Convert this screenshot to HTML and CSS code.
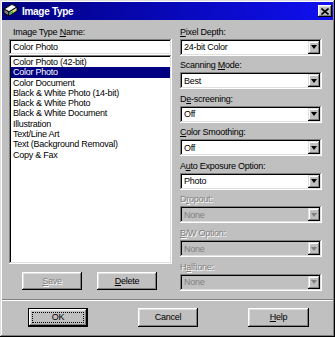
FILE: index.html
```html
<!DOCTYPE html>
<html lang="en">
<head>
    <meta charset="UTF-8">
    <title>Image Type</title>
    <link rel="stylesheet" href="styles.css">
</head>
<body>
    <div class="window">
        <div class="titlebar">
            <svg class="app-icon" width="16" height="16" viewBox="0 0 16 16">
                <polygon points="1,6 9,1 14,4 6,9" fill="#c0c0c0" stroke="#000" stroke-width="1"/>
                <polygon points="3,6 9,2.5 12,4.3 6,7.8" fill="#fff"/>
                <polygon points="1,6 6,9 6,13 1,10" fill="#808080" stroke="#000" stroke-width="1"/>
                <polygon points="6,9 14,4 14,8 6,13" fill="#dfdfdf" stroke="#000" stroke-width="1"/>
                <line x1="7" y1="10.5" x2="10" y2="8.7" stroke="#00a000" stroke-width="1.2"/>
                <line x1="10" y1="8.7" x2="13" y2="6.9" stroke="#e0e000" stroke-width="1.2"/>
            </svg>
            <span class="title">Image Type</span>
            <button class="close-btn">
                <svg width="8" height="7" viewBox="0 0 8 7">
                    <path d="M0.5 0.5 L7.5 6.5 M7.5 0.5 L0.5 6.5" stroke="#000" stroke-width="1.6"/>
                </svg>
            </button>
        </div>

        <div class="dialog">
            <div class="left">
                <div class="lbl">Image Type <u>N</u>ame:</div>
                <div class="field">Color Photo</div>
                <ul class="listbox">
                    <li>Color Photo (42-bit)</li>
                    <li class="selected">Color Photo</li>
                    <li>Color Document</li>
                    <li>Black &amp; White Photo (14-bit)</li>
                    <li>Black &amp; White Photo</li>
                    <li>Black &amp; White Document</li>
                    <li>Illustration</li>
                    <li>Text/Line Art</li>
                    <li>Text (Background Removal)</li>
                    <li>Copy &amp; Fax</li>
                </ul>
                <div class="list-buttons">
                    <button class="btn" disabled><u>S</u>ave</button>
                    <button class="btn"><u>D</u>elete</button>
                </div>
            </div>

            <div class="right">
                <div class="group">
                    <div class="lbl"><u>P</u>ixel Depth:</div>
                    <div class="combo"><span class="value">24-bit Color</span><span class="drop"></span></div>
                </div>
                <div class="group">
                    <div class="lbl">Scanning <u>M</u>ode:</div>
                    <div class="combo"><span class="value">Best</span><span class="drop"></span></div>
                </div>
                <div class="group">
                    <div class="lbl">D<u>e</u>-screening:</div>
                    <div class="combo"><span class="value">Off</span><span class="drop"></span></div>
                </div>
                <div class="group">
                    <div class="lbl"><u>C</u>olor Smoothing:</div>
                    <div class="combo"><span class="value">Off</span><span class="drop"></span></div>
                </div>
                <div class="group">
                    <div class="lbl">A<u>u</u>to Exposure Option:</div>
                    <div class="combo"><span class="value">Photo</span><span class="drop"></span></div>
                </div>
                <div class="group disabled">
                    <div class="lbl">D<u>r</u>opout:</div>
                    <div class="combo"><span class="value">None</span><span class="drop"></span></div>
                </div>
                <div class="group disabled">
                    <div class="lbl"><u>B</u>/W Option:</div>
                    <div class="combo"><span class="value">None</span><span class="drop"></span></div>
                </div>
                <div class="group disabled">
                    <div class="lbl">H<u>a</u>lftone:</div>
                    <div class="combo"><span class="value">None</span><span class="drop"></span></div>
                </div>
            </div>
        </div>

        <div class="separator"></div>

        <div class="footer">
            <button class="btn default"><span class="focus">OK</span></button>
            <button class="btn">Cancel</button>
            <button class="btn wide"><u>H</u>elp</button>
        </div>
    </div>
</body>
</html>
```

FILE: styles.css
```css
body {
    margin: 0;
    font-family: "Liberation Sans", Arial, sans-serif;
    font-size: 9px;
    letter-spacing: -0.25px;
    color: #000;
    background-color: #c0c0c0;
}
.window {
    width: 335px;
    height: 337px;
    box-sizing: border-box;
    padding: 2px;
    background-color: #c0c0c0;
    box-shadow: inset -1px -1px #000, inset 1px 1px #dfdfdf, inset -2px -2px #808080, inset 2px 2px #fff;
    display: flex;
    flex-direction: column;
}
.titlebar {
    height: 18px;
    display: flex;
    align-items: center;
    padding: 0 1px 0 1px;
    background: linear-gradient(90deg, #000080, #1010f0);
    color: #fff;
}
.app-icon {
    flex: none;
}
.title {
    margin-left: 3px;
    font-size: 10px;
    font-weight: bold;
    letter-spacing: -0.3px;
}
.close-btn {
    margin-left: auto;
    width: 14px;
    height: 12px;
    padding: 0;
    border: 0;
    background-color: #c0c0c0;
    box-shadow: inset -1px -1px #000, inset 1px 1px #fff, inset -2px -2px #808080, inset 2px 2px #dfdfdf;
    display: flex;
    align-items: center;
    justify-content: center;
}
.dialog {
    display: grid;
    grid-template-columns: 163px 142px;
    column-gap: 8px;
    padding: 5.5px 0 0 7px;
}
.left {
    display: flex;
    flex-direction: column;
}
.lbl {
    height: 13px;
    line-height: 13px;
    padding-left: 4px;
    white-space: nowrap;
}
.right .lbl {
    padding-left: 0;
}
.field {
    height: 16.5px;
    box-sizing: border-box;
    padding: 0 4px;
    line-height: 16.5px;
    background-color: #fff;
    box-shadow: inset -1px -1px #fff, inset 1px 1px #808080, inset -2px -2px #dfdfdf, inset 2px 2px #000;
}
.listbox {
    list-style: none;
    margin: 0;
    padding: 2px;
    height: 209px;
    box-sizing: border-box;
    background-color: #fff;
    box-shadow: inset -1px -1px #fff, inset 1px 1px #808080, inset -2px -2px #dfdfdf, inset 2px 2px #000;
    overflow: hidden;
}
.listbox li {
    height: 10.3px;
    line-height: 10.3px;
    padding-left: 2px;
    white-space: nowrap;
}
.listbox li.selected {
    background-color: #000080;
    color: #fff;
}
.list-buttons {
    display: flex;
    gap: 15px;
    margin-top: 8px;
    padding-left: 13px;
}
.btn {
    width: 60px;
    height: 18px;
    padding: 0;
    border: 0;
    box-sizing: border-box;
    font: inherit;
    letter-spacing: inherit;
    color: #000;
    background-color: #c0c0c0;
    box-shadow: inset -1px -1px #000, inset 1px 1px #fff, inset -2px -2px #808080, inset 2px 2px #dfdfdf;
}
.btn:disabled {
    color: #808080;
    text-shadow: 1px 1px #fff;
}
.btn.wide {
    width: 61px;
}
.btn.default {
    border: 1px solid #000;
    padding: 3px;
    display: flex;
}
.focus {
    flex: 1;
    display: flex;
    align-items: center;
    justify-content: center;
    border: 1px dotted #000;
}
.right {
    display: flex;
    flex-direction: column;
    gap: 3.6px;
}
.combo {
    height: 17px;
    box-sizing: border-box;
    padding: 2px;
    display: flex;
    align-items: center;
    background-color: #fff;
    box-shadow: inset -1px -1px #fff, inset 1px 1px #808080, inset -2px -2px #dfdfdf, inset 2px 2px #000;
}
.combo .value {
    flex: 1;
    padding-left: 2px;
}
.combo .drop {
    width: 12px;
    height: 13px;
    background-color: #c0c0c0;
    box-shadow: inset -1px -1px #000, inset 1px 1px #dfdfdf, inset -2px -2px #808080, inset 2px 2px #fff;
    display: flex;
    align-items: center;
    justify-content: center;
}
.combo .drop::after {
    content: "";
    width: 0;
    height: 0;
    border-left: 3px solid transparent;
    border-right: 3px solid transparent;
    border-top: 4px solid #000;
}
.group.disabled .lbl {
    color: #808080;
    text-shadow: 1px 1px #fff;
}
.group.disabled .combo {
    background-color: #c0c0c0;
    color: #808080;
}
.group.disabled .combo .drop::after {
    border-top-color: #808080;
}
.separator {
    margin-top: 8px;
    height: 0;
    border-top: 1px solid #808080;
    border-bottom: 1px solid #fff;
}
.footer {
    display: flex;
    gap: 50px;
    margin-top: 7px;
    padding-left: 26px;
}
.footer .btn {
    height: 19px;
}
```
